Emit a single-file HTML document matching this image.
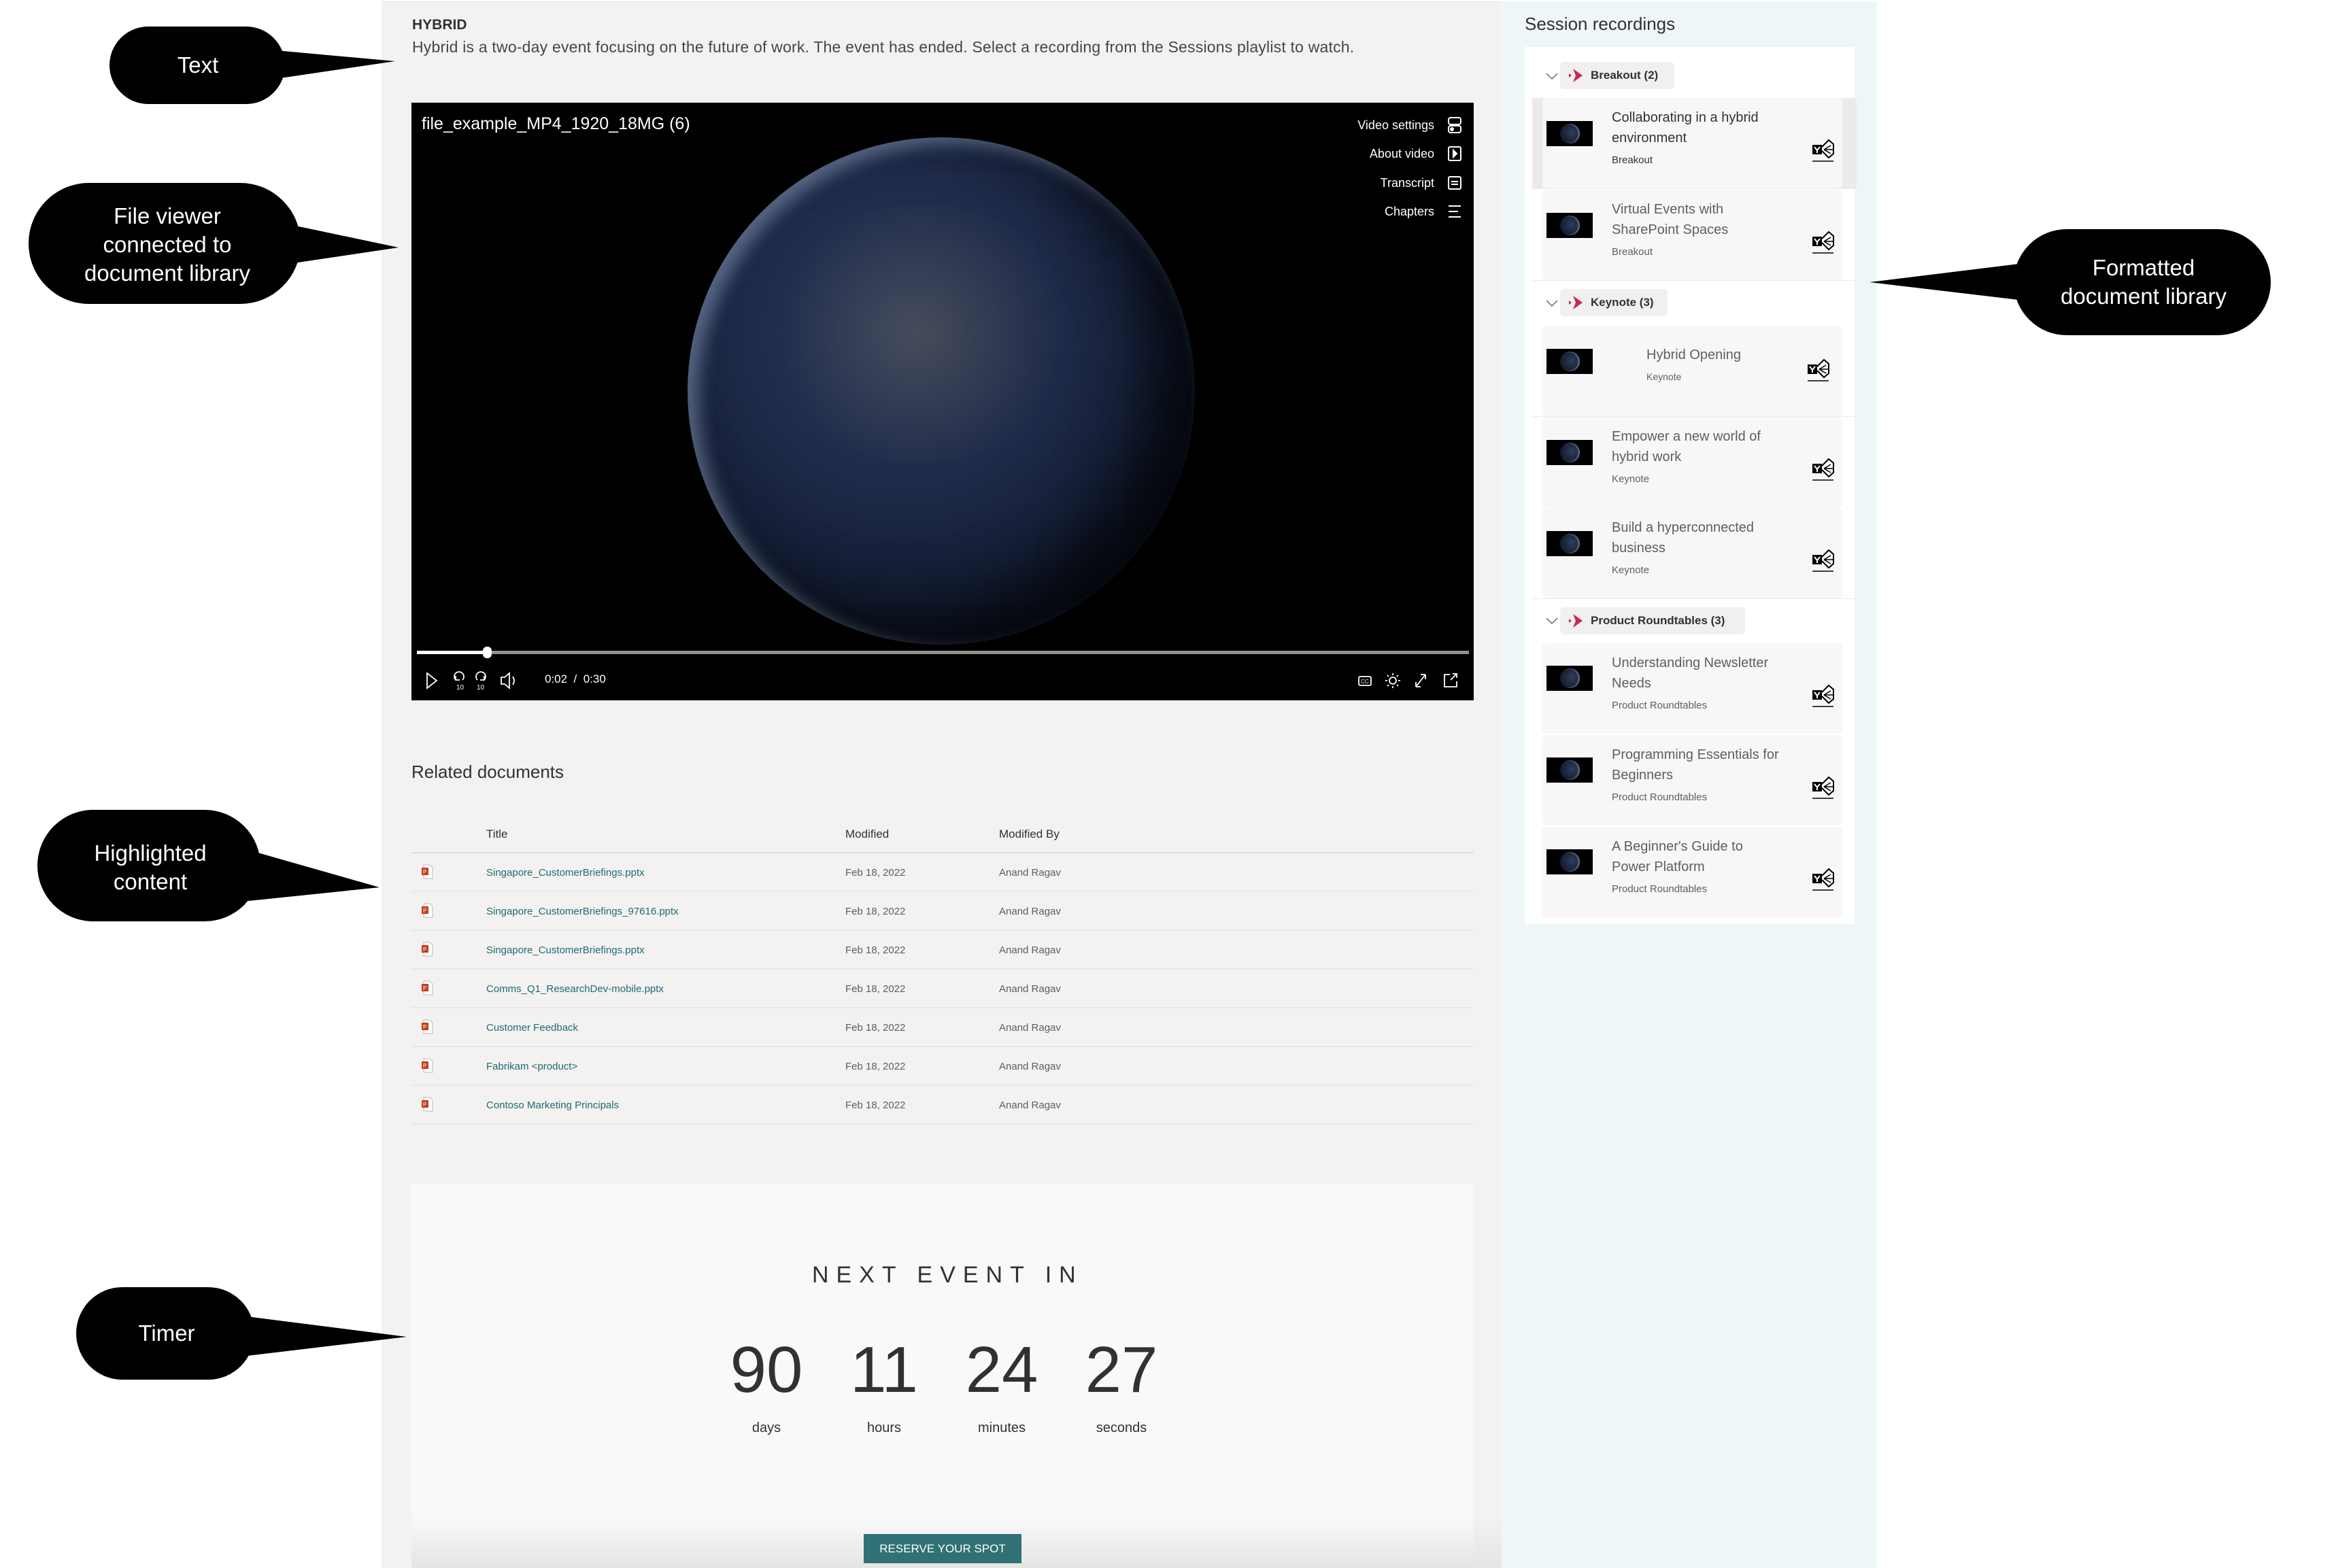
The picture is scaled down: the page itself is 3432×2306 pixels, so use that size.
<!DOCTYPE html>
<html><head><meta charset="utf-8"><style>
*{margin:0;padding:0;box-sizing:border-box}
body{width:3432px;height:2306px;background:#fff;position:relative;overflow:hidden;font-family:"Liberation Sans",Arial,sans-serif;color:#323130}
.a{position:absolute;white-space:nowrap}
.row{position:absolute;left:605px;width:1562px;height:57px;border-bottom:2px solid #e9e8e6}
.row span{position:absolute;top:20px;font-size:15px}
.t{left:110px;color:#1e6b73}.d{left:638px;color:#605e5c}.b{left:864px;color:#605e5c}
.ic{position:absolute;left:14px;top:16px}
.card{position:absolute;left:2268px;width:441px;height:133px;background:#f8f7f7;border-radius:6px}
.thumb{position:absolute;left:6px;width:68px;height:37px;background:#000;overflow:hidden}
.thumb i{position:absolute;left:20px;top:4px;width:29px;height:29px;border-radius:50%;background:radial-gradient(circle at 60% 45%,#2d3d5c,#141c30 70%,#0a0f1a);box-shadow:-2px 0 2px #6d7c95 inset}
.tt{position:absolute;left:102px;font-size:20px;line-height:30px;color:#605e5c;white-space:nowrap}
.sub{position:absolute;left:102px;font-size:15px;color:#605e5c}
.yi{position:absolute;left:397px}
.pill{position:absolute;left:2294px;height:40px;background:#f1f0ef;border-radius:6px;font-weight:bold;font-size:17px;line-height:40px;padding-left:45px;padding-right:14px}
.chev{position:absolute;left:2272px}
</style></head><body>

<div class="a" style="left:561px;top:2px;width:1647px;height:2304px;background:#f3f2f1;border-top:1px solid #e6e6e6"></div>
<div class="a" style="left:2208px;top:2px;width:552px;height:2304px;background:#eff6f7"></div>

<div class="a" style="left:606px;top:25px;font-size:21px;font-weight:bold;color:#323130">HYBRID</div>
<div class="a" style="left:606px;top:56px;font-size:23px;letter-spacing:0.2px;color:#484644">Hybrid is a two-day event focusing on the future of work. The event has ended. Select a recording from the Sessions playlist to watch.</div>

<div class="a" style="left:605px;top:151px;width:1562px;height:879px;background:#000;overflow:hidden">
  <div style="position:absolute;left:406px;top:51px;width:746px;height:746px;border-radius:50%;background:radial-gradient(circle at 42% 38%,#2b3a5c 0%,#1f2b4a 35%,#131c33 62%,#070b14 92%);box-shadow:inset 16px 10px 24px rgba(160,180,210,.45), inset -60px -40px 90px rgba(0,0,0,.7)"></div>
  <div style="position:absolute;left:520px;top:150px;width:460px;height:380px;border-radius:50%;background:radial-gradient(circle,rgba(210,170,90,.16),rgba(0,0,0,0) 70%)"></div>
  <div class="a" style="left:15px;top:17px;font-size:25px;color:#fff">file_example_MP4_1920_18MG (6)</div>
  <div class="a" style="right:58px;top:23px;font-size:18px;color:#fff">Video settings</div>
  <div class="a" style="right:58px;top:65px;font-size:18px;color:#fff">About video</div>
  <div class="a" style="right:58px;top:108px;font-size:18px;color:#fff">Transcript</div>
  <div class="a" style="right:58px;top:150px;font-size:18px;color:#fff">Chapters</div>
  <svg class="a" style="left:1520px;top:20px" width="30" height="175" fill="none" stroke="#fff" stroke-width="2">
    <rect x="5" y="2" width="18" height="10" rx="3"/><rect x="5" y="14" width="18" height="10" rx="3"/><circle cx="10" cy="19" r="2" fill="#fff"/>
    <rect x="5" y="45" width="18" height="20" rx="2"/><path d="M12 50l5 5-5 5z" fill="#fff"/>
    <rect x="5" y="89" width="18" height="18" rx="2"/><path d="M9 96h10M9 100h10"/>
    <path d="M5 132h18M5 140h14M5 148h18"/>
  </svg>
  <div style="position:absolute;left:8px;top:806px;width:1547px;height:5px;background:#909090"></div>
  <div style="position:absolute;left:8px;top:806px;width:104px;height:5px;background:#fff"></div>
  <div style="position:absolute;left:105px;top:800px;width:13px;height:17px;border-radius:6px;background:#fff"></div>
  <svg class="a" style="left:20px;top:835px" width="190" height="30" fill="none" stroke="#fff" stroke-width="1.8">
    <path d="M3 4l14 11-14 11z"/>
    <path d="M45 14a7 7 0 1 1 10 0M45 8v6h6"/><text x="46" y="28" font-size="10" fill="#fff" stroke="none" font-family="Liberation Sans">10</text>
    <path d="M87 14a7 7 0 1 0-10 0M87 8v6h-6"/><text x="76" y="28" font-size="10" fill="#fff" stroke="none" font-family="Liberation Sans">10</text>
    <path d="M112 10h5l7-6v22l-7-6h-5zM129 9q4 6 0 12"/>
  </svg>
  <div class="a" style="left:196px;top:838px;font-size:17px;color:#fff">0:02&nbsp; /&nbsp; 0:30</div>
  <svg class="a" style="left:1390px;top:835px" width="160" height="30" fill="none" stroke="#fff" stroke-width="1.8">
    <rect x="3" y="9" width="18" height="13" rx="2"/><text x="6" y="19" font-size="8" fill="#fff" stroke="none" font-family="Liberation Sans">CC</text>
    <circle cx="53" cy="15" r="5"/><path d="M53 4v3M53 23v3M42 15h3M61 15h3M45 7l2 2M59 21l2 2M45 23l2-2M59 9l2-2"/>
    <path d="M87 24L101 6M87 24v-7M87 24h7M101 6h-7M101 6v7"/>
    <path d="M137 6h-8v18h18v-8M138 14l9-9M141 5h6v6"/>
  </svg>
</div>

<div class="a" style="left:605px;top:1120px;font-size:26px;color:#323130">Related documents</div>
<div class="a" style="left:715px;top:1217px;font-size:17px">Title</div>
<div class="a" style="left:1243px;top:1217px;font-size:17px">Modified</div>
<div class="a" style="left:1469px;top:1217px;font-size:17px">Modified By</div>
<div class="a" style="left:605px;top:1253px;width:1562px;height:2px;background:#dedddb"></div>
<div class="row" style="top:1255px"><svg class="ic" width="18" height="22"><path d="M4 1h9l4 4v16H4z" fill="#fff" stroke="#bbb"/><rect x="1" y="5" width="10" height="11" fill="#c43e1c"/><text x="3" y="14" font-size="8" fill="#fff" font-family="Liberation Sans">P</text></svg><span class="t">Singapore_CustomerBriefings.pptx</span><span class="d">Feb 18, 2022</span><span class="b">Anand Ragav</span></div>
<div class="row" style="top:1312px"><svg class="ic" width="18" height="22"><path d="M4 1h9l4 4v16H4z" fill="#fff" stroke="#bbb"/><rect x="1" y="5" width="10" height="11" fill="#c43e1c"/><text x="3" y="14" font-size="8" fill="#fff" font-family="Liberation Sans">P</text></svg><span class="t">Singapore_CustomerBriefings_97616.pptx</span><span class="d">Feb 18, 2022</span><span class="b">Anand Ragav</span></div>
<div class="row" style="top:1369px"><svg class="ic" width="18" height="22"><path d="M4 1h9l4 4v16H4z" fill="#fff" stroke="#bbb"/><rect x="1" y="5" width="10" height="11" fill="#c43e1c"/><text x="3" y="14" font-size="8" fill="#fff" font-family="Liberation Sans">P</text></svg><span class="t">Singapore_CustomerBriefings.pptx</span><span class="d">Feb 18, 2022</span><span class="b">Anand Ragav</span></div>
<div class="row" style="top:1426px"><svg class="ic" width="18" height="22"><path d="M4 1h9l4 4v16H4z" fill="#fff" stroke="#bbb"/><rect x="1" y="5" width="10" height="11" fill="#c43e1c"/><text x="3" y="14" font-size="8" fill="#fff" font-family="Liberation Sans">P</text></svg><span class="t">Comms_Q1_ResearchDev-mobile.pptx</span><span class="d">Feb 18, 2022</span><span class="b">Anand Ragav</span></div>
<div class="row" style="top:1483px"><svg class="ic" width="18" height="22"><path d="M4 1h9l4 4v16H4z" fill="#fff" stroke="#bbb"/><rect x="1" y="5" width="10" height="11" fill="#c43e1c"/><text x="3" y="14" font-size="8" fill="#fff" font-family="Liberation Sans">P</text></svg><span class="t">Customer Feedback</span><span class="d">Feb 18, 2022</span><span class="b">Anand Ragav</span></div>
<div class="row" style="top:1540px"><svg class="ic" width="18" height="22"><path d="M4 1h9l4 4v16H4z" fill="#fff" stroke="#bbb"/><rect x="1" y="5" width="10" height="11" fill="#c43e1c"/><text x="3" y="14" font-size="8" fill="#fff" font-family="Liberation Sans">P</text></svg><span class="t">Fabrikam &lt;product&gt;</span><span class="d">Feb 18, 2022</span><span class="b">Anand Ragav</span></div>
<div class="row" style="top:1597px"><svg class="ic" width="18" height="22"><path d="M4 1h9l4 4v16H4z" fill="#fff" stroke="#bbb"/><rect x="1" y="5" width="10" height="11" fill="#c43e1c"/><text x="3" y="14" font-size="8" fill="#fff" font-family="Liberation Sans">P</text></svg><span class="t">Contoso Marketing Principals</span><span class="d">Feb 18, 2022</span><span class="b">Anand Ragav</span></div>

<div class="a" style="left:605px;top:1741px;width:1562px;height:565px;background:#faf9f9"></div>
<div class="a" style="left:605px;top:2230px;width:1603px;height:76px;background:linear-gradient(#faf9f900,#e6e5e4)"></div>
<div class="a" style="left:1194px;top:1856px;font-size:34px;letter-spacing:11px;color:#323130">NEXT EVENT IN</div>
<div class="a" style="left:1067px;top:1960px;width:120px;text-align:center;font-size:96px;color:#323130">90</div>
<div class="a" style="left:1240px;top:1960px;width:120px;text-align:center;font-size:96px;color:#323130">11</div>
<div class="a" style="left:1413px;top:1960px;width:120px;text-align:center;font-size:96px;color:#323130">24</div>
<div class="a" style="left:1589px;top:1960px;width:120px;text-align:center;font-size:96px;color:#323130">27</div>
<div class="a" style="left:1067px;top:2089px;width:120px;text-align:center;font-size:20px">days</div>
<div class="a" style="left:1240px;top:2089px;width:120px;text-align:center;font-size:20px">hours</div>
<div class="a" style="left:1413px;top:2089px;width:120px;text-align:center;font-size:20px">minutes</div>
<div class="a" style="left:1589px;top:2089px;width:120px;text-align:center;font-size:20px">seconds</div>
<div class="a" style="left:1270px;top:2256px;width:232px;height:43px;background:#2f7174;color:#fff;font-size:17px;text-align:center;line-height:43px">RESERVE YOUR SPOT</div>

<div class="a" style="left:2242px;top:20px;font-size:26px;color:#323130">Session recordings</div>
<div class="a" style="left:2242px;top:69px;width:485px;height:1290px;background:#fff"></div>

<svg width="0" height="0" style="position:absolute"><defs>
<g id="chev"><path d="M2 6l8 8 8-8" fill="none" stroke="#777" stroke-width="1.6"/></g>
<g id="arr"><path d="M6 0l14 10-14 10 4-10z" fill="#c4294f"/><path d="M0 7l4 3-4 3z" fill="#c4294f"/></g>
<g id="yam"><rect x="0" y="9" width="14" height="14" fill="#000"/><path d="M3 12l4 5 4-5M7 17v4" stroke="#fff" stroke-width="2" fill="none"/><path d="M14 12l10-10 7 6v14l-7 6-10-10" fill="none" stroke="#000" stroke-width="2"/><path d="M17 16l10-6M17 16h13M17 16l10 6" stroke="#000" stroke-width="1.5"/><path d="M0 33h31" stroke="#000" stroke-width="1.5"/></g>
</defs></svg>

<svg class="chev" style="top:102px" width="20" height="20"><use href="#chev"/></svg>
<div class="pill" style="top:91px;width:168px">Breakout (2)</div>
<svg class="a" style="left:2307px;top:101px" width="22" height="20"><use href="#arr"/></svg>
<div class="a" style="left:2253px;top:144px;width:477px;height:134px;background:#edebe9"></div>
<div class="card" style="top:144px">
 <div class="thumb" style="top:34px"><i></i></div>
 <div class="tt" style="top:14px;color:#323130">Collaborating in a hybrid<br>environment</div>
 <div class="sub" style="top:83px;color:#323130">Breakout</div>
 <svg class="yi" style="top:60px" width="34" height="36"><use href="#yam"/></svg>
</div>
<div class="card" style="top:279px">
 <div class="thumb" style="top:34px"><i></i></div>
 <div class="tt" style="top:14px">Virtual Events with<br>SharePoint Spaces</div>
 <div class="sub" style="top:83px">Breakout</div>
 <svg class="yi" style="top:60px" width="34" height="36"><use href="#yam"/></svg>
</div>
<div class="a" style="left:2253px;top:412px;width:477px;height:1px;background:#edebe9"></div>

<svg class="chev" style="top:436px" width="20" height="20"><use href="#chev"/></svg>
<div class="pill" style="top:425px;width:158px">Keynote (3)</div>
<svg class="a" style="left:2307px;top:435px" width="22" height="20"><use href="#arr"/></svg>
<div class="card" style="top:479px">
 <div class="thumb" style="top:34px"><i></i></div>
 <div class="tt" style="left:153px;top:28px">Hybrid Opening</div>
 <div class="sub" style="left:153px;top:67px;font-size:14px">Keynote</div>
 <svg class="yi" style="left:390px;top:48px" width="34" height="36"><use href="#yam"/></svg>
</div>
<div class="a" style="left:2253px;top:612px;width:477px;height:1px;background:#edebe9"></div>
<div class="card" style="top:613px">
 <div class="thumb" style="top:34px"><i></i></div>
 <div class="tt" style="top:14px">Empower a new world of<br>hybrid work</div>
 <div class="sub" style="top:83px">Keynote</div>
 <svg class="yi" style="top:60px" width="34" height="36"><use href="#yam"/></svg>
</div>
<div class="card" style="top:747px">
 <div class="thumb" style="top:34px"><i></i></div>
 <div class="tt" style="top:14px">Build a hyperconnected<br>business</div>
 <div class="sub" style="top:83px">Keynote</div>
 <svg class="yi" style="top:60px" width="34" height="36"><use href="#yam"/></svg>
</div>
<div class="a" style="left:2253px;top:880px;width:477px;height:1px;background:#edebe9"></div>

<svg class="chev" style="top:903px" width="20" height="20"><use href="#chev"/></svg>
<div class="pill" style="top:893px;width:272px">Product Roundtables (3)</div>
<svg class="a" style="left:2307px;top:903px" width="22" height="20"><use href="#arr"/></svg>
<div class="card" style="top:946px">
 <div class="thumb" style="top:33px"><i></i></div>
 <div class="tt" style="top:14px">Understanding Newsletter<br>Needs</div>
 <div class="sub" style="top:83px">Product Roundtables</div>
 <svg class="yi" style="top:60px" width="34" height="36"><use href="#yam"/></svg>
</div>
<div class="card" style="top:1081px">
 <div class="thumb" style="top:33px"><i></i></div>
 <div class="tt" style="top:14px">Programming Essentials for<br>Beginners</div>
 <div class="sub" style="top:83px">Product Roundtables</div>
 <svg class="yi" style="top:60px" width="34" height="36"><use href="#yam"/></svg>
</div>
<div class="card" style="top:1216px">
 <div class="thumb" style="top:33px"><i></i></div>
 <div class="tt" style="top:14px">A Beginner's Guide to<br>Power Platform</div>
 <div class="sub" style="top:83px">Product Roundtables</div>
 <svg class="yi" style="top:60px" width="34" height="36"><use href="#yam"/></svg>
</div>

<svg class="a" style="left:0;top:0" width="3432" height="2306">
 <g fill="#000">
  <rect x="161" y="39" width="258" height="114" rx="57"/><polygon points="405,74 581,90 405,116"/>
  <rect x="42" y="269" width="400" height="178" rx="89"/><polygon points="425,330 586,364 425,388"/>
  <rect x="55" y="1191" width="328" height="164" rx="82"/><polygon points="365,1250 558,1305 365,1325"/>
  <rect x="112" y="1893" width="262" height="136" rx="68"/><polygon points="355,1935 598,1966 355,1995"/>
  <rect x="2961" y="337" width="378" height="156" rx="78"/><polygon points="2985,386 2749,415 2985,443"/>
 </g>
 <g fill="#fff" font-family="Liberation Sans,Arial,sans-serif" font-size="33" text-anchor="middle">
  <text x="291" y="107">Text</text>
  <text x="246" y="329">File viewer</text><text x="246" y="371">connected to</text><text x="246" y="413">document library</text>
  <text x="221" y="1266">Highlighted</text><text x="221" y="1308">content</text>
  <text x="245" y="1972">Timer</text>
  <text x="3152" y="405">Formatted</text><text x="3152" y="447">document library</text>
 </g>
</svg>
</body></html>
